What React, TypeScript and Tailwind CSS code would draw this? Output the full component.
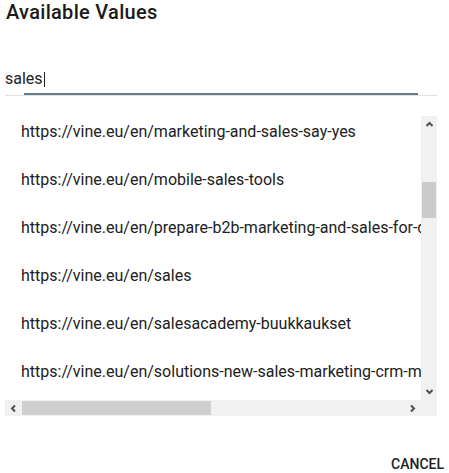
import React from "react";

const values = [
  "https://vine.eu/en/marketing-and-sales-say-yes",
  "https://vine.eu/en/mobile-sales-tools",
  "https://vine.eu/en/prepare-b2b-marketing-and-sales-for-digital-transformation",
  "https://vine.eu/en/sales",
  "https://vine.eu/en/salesacademy-buukkaukset",
  "https://vine.eu/en/solutions-new-sales-marketing-crm-marketing-automation",
  "https://vine.eu/en/sales-enablement",
];

function Arrow({ dir }: { dir: "up" | "down" | "left" | "right" }) {
  const pts = {
    up: "1.5,6 4.5,3 7.5,6",
    down: "1.5,3 4.5,6 7.5,3",
    left: "6,1.5 3,4.5 6,7.5",
    right: "3,1.5 6,4.5 3,7.5",
  }[dir];
  return (
    <svg width="9" height="9" viewBox="0 0 9 9">
      <polyline points={pts} fill="none" stroke="#505050" strokeWidth="2" />
    </svg>
  );
}

export default function App() {
  return (
    <div className="w-[449px] h-[473px] bg-white relative font-['Roboto',sans-serif] text-[#212121]">
      {/* Title */}
      <h2 className="pl-[6px] text-[20px] leading-[24px] font-medium tracking-[0.3px] text-[#1a1a1a]">Available Values</h2>

      {/* Search input */}
      <div className="mt-[42px] mx-[5px] w-[432px]">
        <div className="flex items-center h-[26px] text-[16px] leading-[26px] text-[#212121]">
          <span>sales</span>
          <span className="w-px h-[15px] bg-[#212121] ml-px" />
        </div>
        <div className="relative h-[3px] mt-[1px]">
          <div className="absolute left-0 right-0 bottom-0 h-px bg-[#e0e0e0]" />
          <div className="absolute left-[19px] right-[19px] top-0 h-[2px] bg-[#607d8b]" />
        </div>
      </div>

      {/* List box */}
      <div className="mt-[20px] ml-[5px] w-[432px] flex flex-col">
        <div className="flex h-[284px]">
          <div className="flex-1 overflow-hidden bg-white">
            <div className="-mt-[8px]">
              {values.map((v) => (
                <div key={v} className="h-[48px] flex items-center pl-[16px] whitespace-nowrap text-[16px]">
                  {v}
                </div>
              ))}
            </div>
          </div>
          {/* vertical scrollbar */}
          <div className="w-[16px] bg-[#f1f1f1] flex flex-col">
            <div className="h-[17px] flex items-center justify-center">
              <Arrow dir="up" />
            </div>
            <div className="flex-1 pt-[49px] px-[1px]">
              <div className="h-[36px] bg-[#cbcbcb]" />
            </div>
            <div className="h-[17px] flex items-center justify-center">
              <Arrow dir="down" />
            </div>
          </div>
        </div>
        {/* horizontal scrollbar */}
        <div className="flex h-[16px] bg-[#f1f1f1]">
          <div className="w-[17px] flex items-center justify-center">
            <Arrow dir="left" />
          </div>
          <div className="flex-1 py-[1px]">
            <div className="w-[189px] h-full bg-[#cfcfcf]" />
          </div>
          <div className="w-[17px] flex items-center justify-center">
            <Arrow dir="right" />
          </div>
          <div className="w-[16px]" />
        </div>
      </div>

      {/* Actions */}
      <div className="mt-[36px] flex justify-end pr-[5px]">
        <button className="text-[14px] leading-[24px] font-medium uppercase text-[#212121]">Cancel</button>
      </div>
    </div>
  );
}
